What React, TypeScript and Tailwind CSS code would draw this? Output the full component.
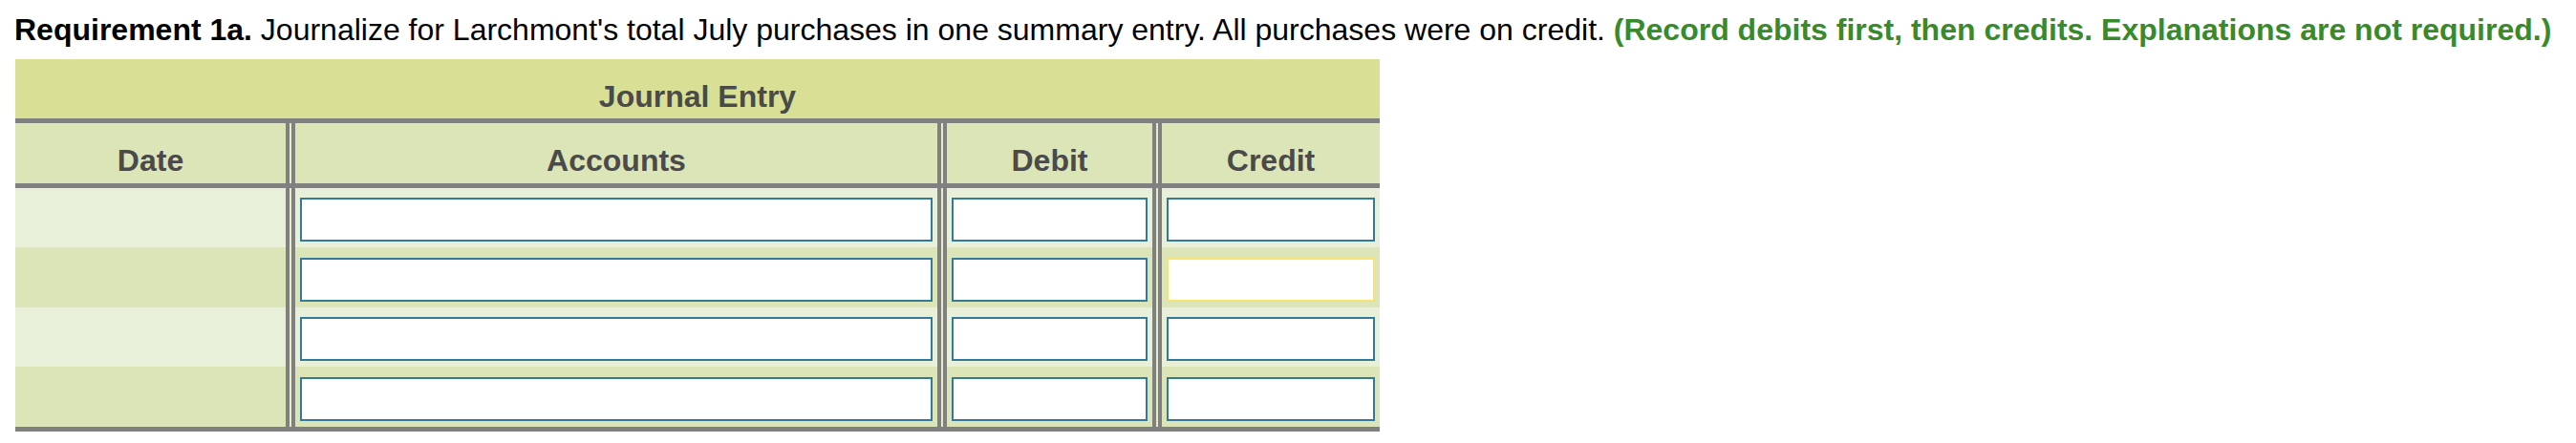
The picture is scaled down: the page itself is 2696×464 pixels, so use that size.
const rows = [
  { bg: "bg-[#e8f0da]", h: "h-[62px]", pt: "pt-[10px]" },
  { bg: "bg-[#dce5b7]", h: "h-[63px]", pt: "pt-[11px]", focusCredit: true },
  { bg: "bg-[#e8f0da]", h: "h-[62px]", pt: "pt-[10px]" },
  { bg: "bg-[#dce5b7]", h: "h-[63px]", pt: "pt-[11px]" },
];

function Field({ focused = false }: { focused?: boolean }) {
  return (
    <input
      type="text"
      className={`block w-full h-[46px] bg-white outline-none border-2 ${
        focused ? "border-[#f8e273]" : "border-[#337a99]"
      }`}
    />
  );
}

export default function App() {
  return (
    <div className="w-[2696px] h-[464px] bg-white font-['Liberation_Sans',Arial,sans-serif]">
      {/* Instructions */}
      <p className="pl-[15px] pt-[13px] text-[32px] leading-[37px] text-black whitespace-nowrap">
        <span className="font-bold">Requirement 1a.</span> Journalize for Larchmont's total July purchases in one
        summary entry. All purchases were on credit.{" "}
        <span className="font-bold text-[#388a2b]">
          (Record debits first, then credits. Explanations are not required.)
        </span>
      </p>

      {/* Journal Entry table */}
      <div className="ml-[16px] mt-[12px] w-[1428px]">
        <div className="h-[62px] bg-[#d9e095] pt-[21px] text-center text-[32px] leading-[37px] font-bold text-[#4a4a4a]">
          Journal Entry
        </div>
        <div className="h-[5px] bg-[#808080]" />

        {/* Column headers */}
        <div className="flex gap-[2px] bg-[#e6ecca] h-[63px]">
          <div className="w-[287px] border-r-4 border-[#808080] bg-[#dce5b7] pt-[21px] text-center text-[32px] leading-[37px] font-bold text-[#4a4a4a]">
            Date
          </div>
          <div className="w-[680px] border-x-4 border-[#808080] bg-[#dce5b7] pt-[21px] text-center text-[32px] leading-[37px] font-bold text-[#4a4a4a]">
            Accounts
          </div>
          <div className="w-[223px] border-x-4 border-[#808080] bg-[#dce5b7] pt-[21px] text-center text-[32px] leading-[37px] font-bold text-[#4a4a4a]">
            Debit
          </div>
          <div className="w-[232px] border-l-4 border-[#808080] bg-[#dce5b7] pt-[21px] text-center text-[32px] leading-[37px] font-bold text-[#4a4a4a]">
            Credit
          </div>
        </div>
        <div className="h-[5px] bg-[#808080]" />

        {/* Entry rows */}
        {rows.map((row, i) => (
          <div key={i} className={`flex gap-[2px] bg-[#e6ecca] ${row.h}`}>
            <div className={`w-[287px] border-r-4 border-[#808080] ${row.bg}`} />
            <div className={`w-[680px] border-x-4 border-[#808080] px-[5px] ${row.pt} ${row.bg}`}>
              <Field />
            </div>
            <div className={`w-[223px] border-x-4 border-[#808080] px-[5px] ${row.pt} ${row.bg}`}>
              <Field />
            </div>
            <div className={`w-[232px] border-l-4 border-[#808080] px-[5px] ${row.pt} ${row.bg}`}>
              <Field focused={row.focusCredit} />
            </div>
          </div>
        ))}
        <div className="h-[5px] bg-[#808080]" />
      </div>
    </div>
  );
}
